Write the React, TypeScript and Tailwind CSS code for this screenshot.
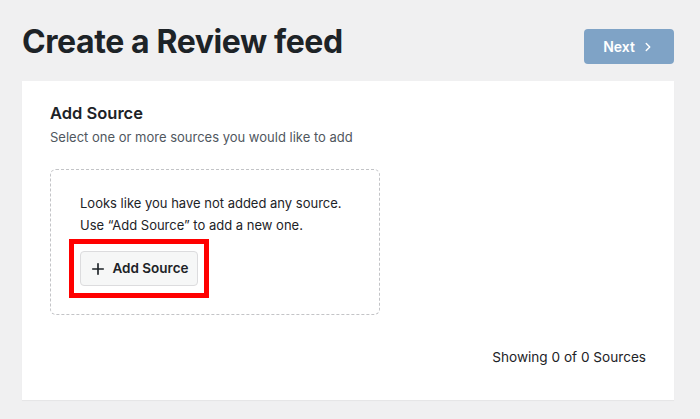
import { Plus, ChevronRight } from 'lucide-react';

export default function App() {
  return (
    <div className="min-h-[419px] w-[700px] bg-[#f0f0f1] pl-[22px] pr-[26px] pt-[20px] pb-[19px] text-[#1d2327] font-['Inter',sans-serif]">
      <div className="flex items-start justify-between">
        <h1 className="text-[32px] font-bold leading-[44px] tracking-[-0.4px] text-[#1d2327]">
          Create a Review feed
        </h1>
        <button className="mt-[9px] flex h-[35px] w-[90px] items-center justify-center gap-[6px] rounded-[4px] bg-[#7fa3c6] text-[14px] font-semibold text-white">
          Next
          <ChevronRight className="h-[14px] w-[14px]" strokeWidth={2.5} />
        </button>
      </div>

      <div className="mt-[17px] h-[319px] bg-white px-[28px] pt-[20px] shadow-[0_1px_1px_rgba(0,0,0,0.04)]">
        <h2 className="text-[16.5px] font-semibold leading-[24px] text-[#1d2327]">Add Source</h2>
        <p className="mt-[2px] whitespace-nowrap text-[13px] leading-[20px] text-[#50575e]">
          Select one or more sources you would like to add
        </p>

        <div className="mt-[22px] h-[146px] w-[330px] rounded-[6px] border border-dashed border-[#c3c4c7] px-[29px] pt-[22px]">
          <p className="whitespace-nowrap text-[13px] leading-[22px] text-[#1d2327]">Looks like you have not added any source.</p>
          <p className="whitespace-nowrap text-[13px] leading-[22px] text-[#1d2327]">Use “Add Source” to add a new one.</p>
          <div className="relative mt-[15px] w-fit">
            <button className="flex h-[35px] w-[118px] items-center justify-center gap-[5px] rounded-[4px] border border-[#dcdcde] bg-[#f6f7f7] text-[13.5px] font-semibold text-[#1d2327]">
              <Plus className="h-[18px] w-[18px]" strokeWidth={2.2} />
              Add Source
            </button>
            <div className="pointer-events-none absolute -left-[11px] -top-[12px] h-[59px] w-[140px] border-[5px] border-[#ff0000]" />
          </div>
        </div>

        <div className="mt-[32px] flex justify-end">
          <span className="text-[13.6px] text-[#1d2327]">Showing 0 of 0 Sources</span>
        </div>
      </div>
    </div>
  );
}
